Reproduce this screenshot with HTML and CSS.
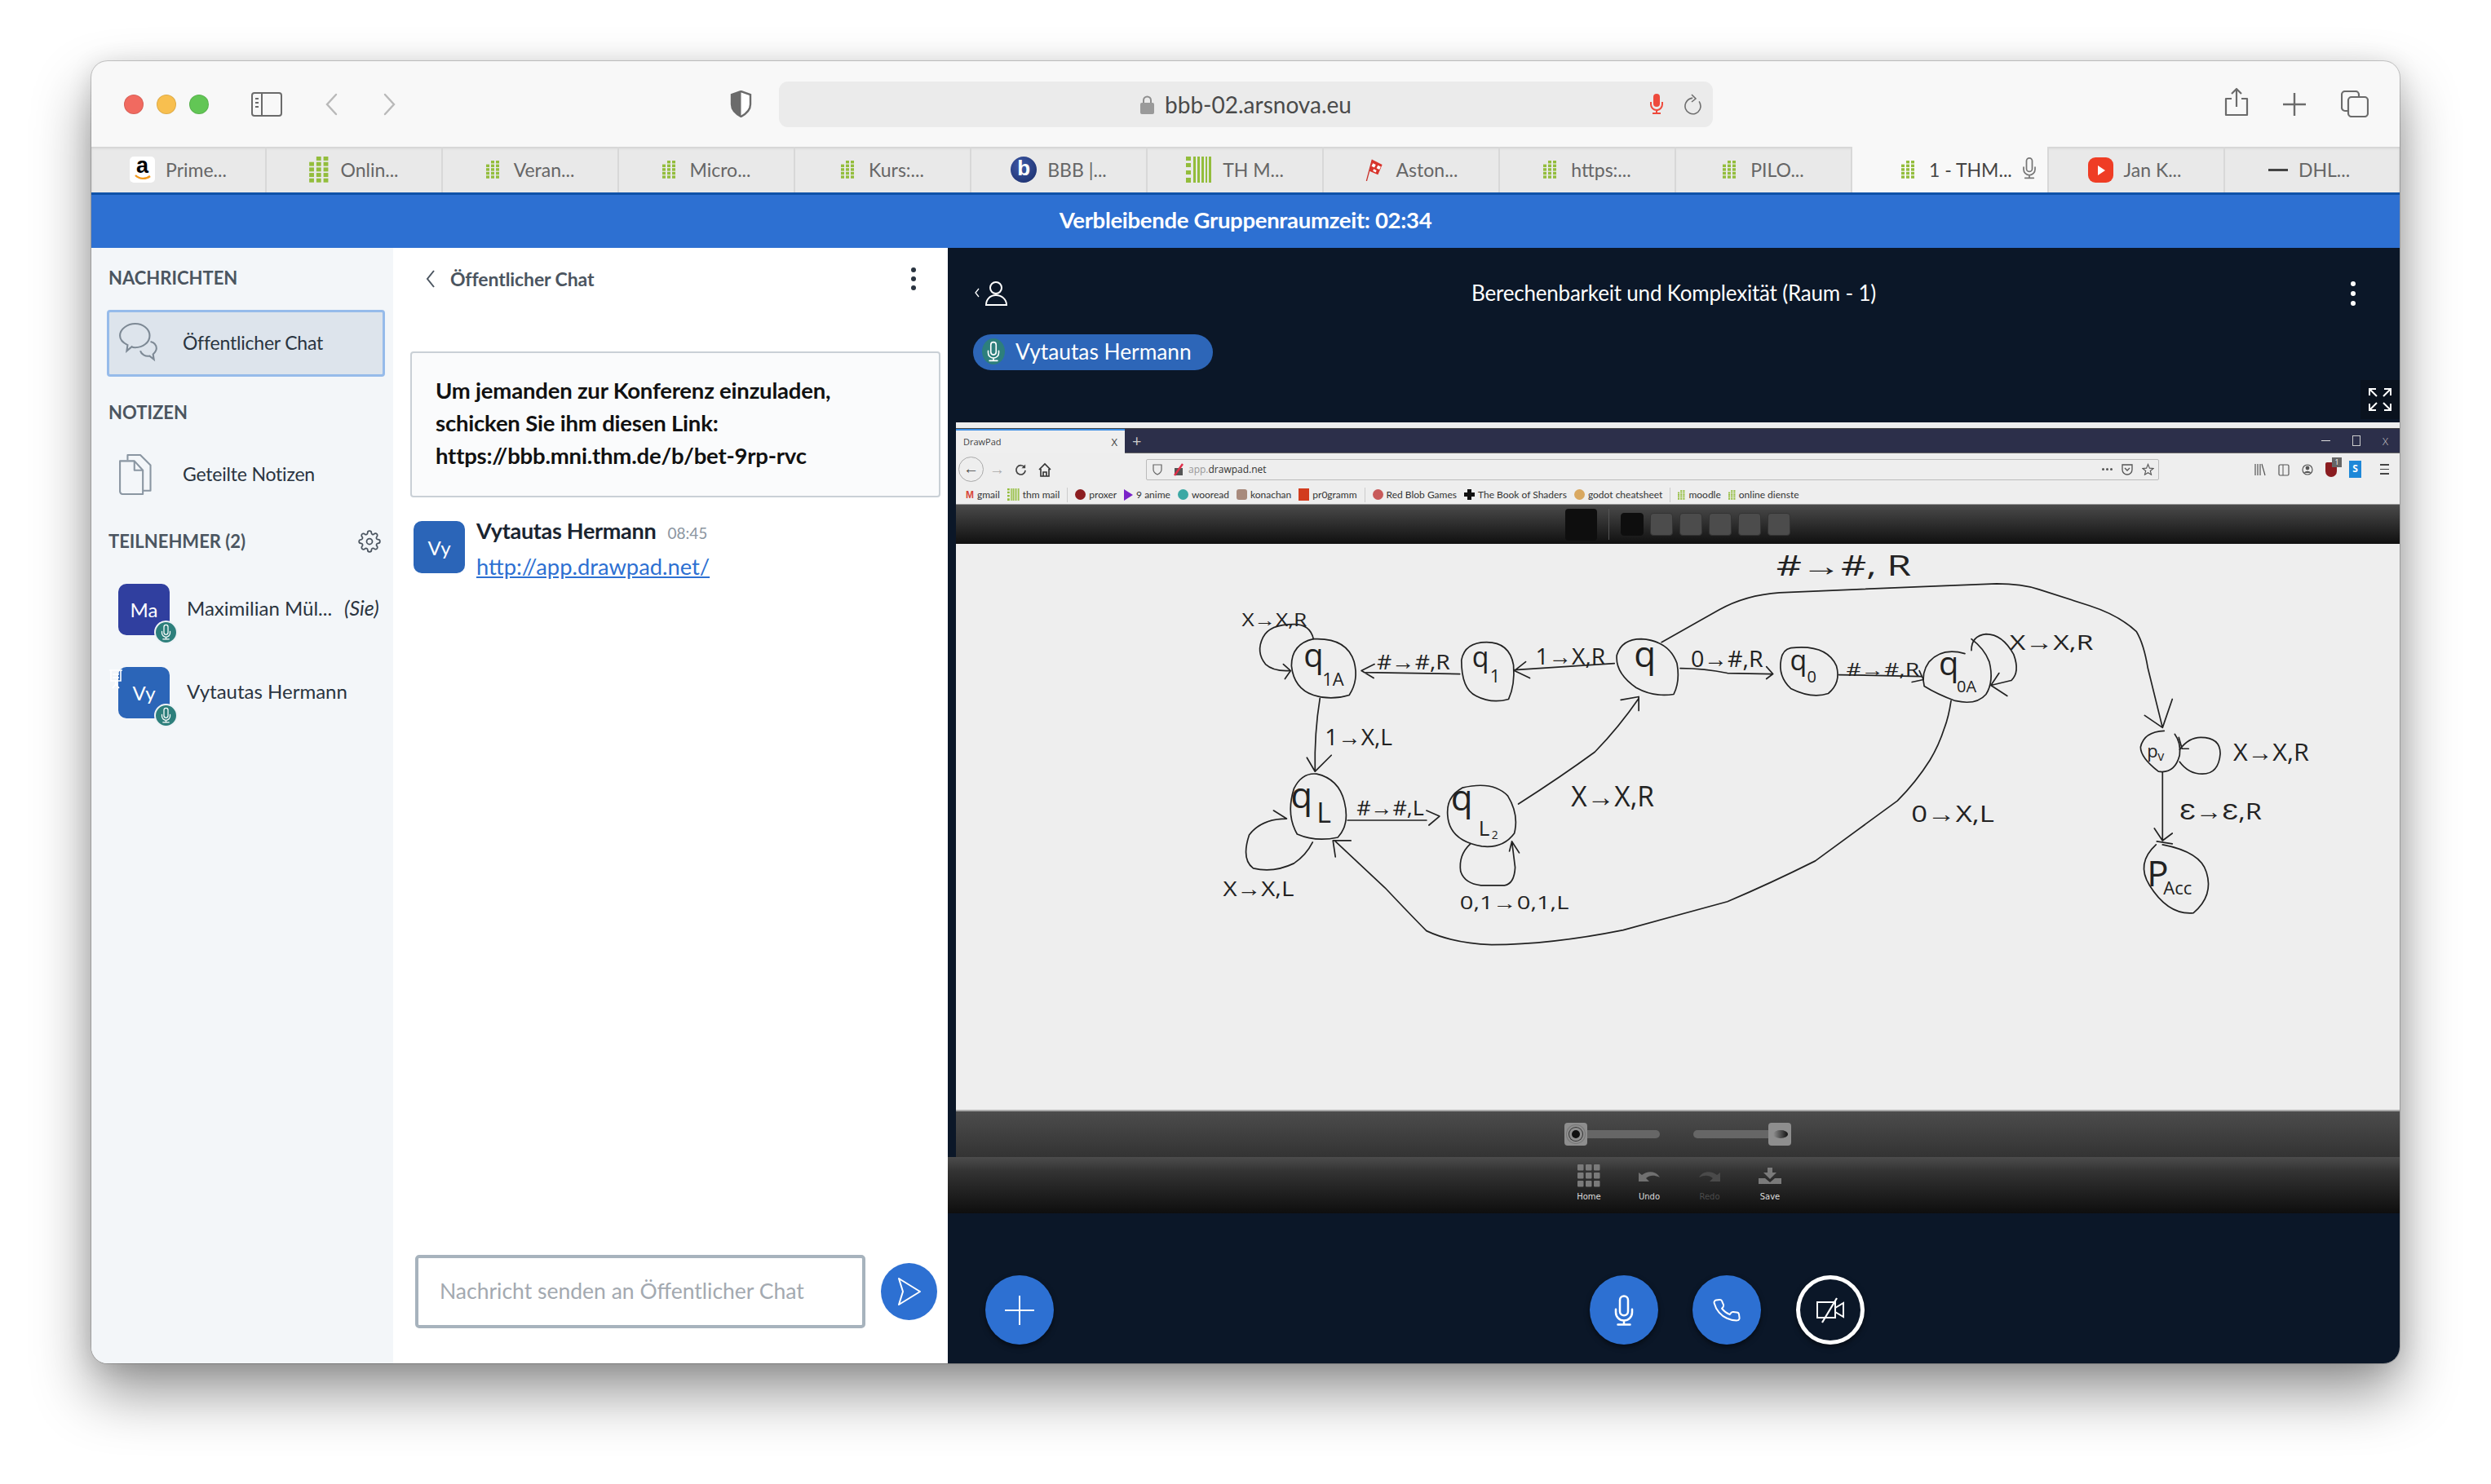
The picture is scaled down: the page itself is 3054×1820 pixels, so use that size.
FILE: index.html
```html
<!DOCTYPE html>
<html lang="de">
<head>
    <meta charset="UTF-8">
    <title>bbb-02.arsnova.eu</title>
    <link rel="stylesheet" href="styles.css">
</head>
<body>
    <svg class="sprites" width="0" height="0">
        <symbol id="grid" viewBox="0 0 17 22">
            <g fill="#93bd3c">
                <rect x="6" y="0" width="4" height="3.4"/><rect x="12" y="0" width="4" height="3.4"/>
                <rect x="0" y="4.6" width="4" height="3.4"/><rect x="6" y="4.6" width="4" height="3.4"/><rect x="12" y="4.6" width="4" height="3.4"/>
                <rect x="0" y="9.2" width="4" height="3.4"/><rect x="6" y="9.2" width="4" height="3.4"/><rect x="12" y="9.2" width="4" height="3.4"/>
                <rect x="0" y="13.8" width="4" height="3.4"/><rect x="6" y="13.8" width="4" height="3.4"/><rect x="12" y="13.8" width="4" height="3.4"/>
                <rect x="0" y="18.4" width="4" height="3.4"/><rect x="6" y="18.4" width="4" height="3.4"/><rect x="12" y="18.4" width="4" height="3.4"/>
            </g>
        </symbol>
        <symbol id="mic" viewBox="0 0 24 32">
            <g fill="none" stroke="currentColor" stroke-width="2" stroke-linecap="round">
                <rect x="8" y="2" width="8" height="19" rx="4"/>
                <path d="M4 15v3a8 8 0 0 0 16 0v-3M12 26v4M6 30h12"/>
            </g>
        </symbol>
        <symbol id="thm" viewBox="0 0 32 32">
            <g fill="#93bd3c">
                <rect x="0" y="0" width="6" height="5"/><rect x="0" y="8" width="6" height="5"/><rect x="0" y="17" width="6" height="5"/><rect x="0" y="26" width="6" height="6"/>
                <rect x="9" y="0" width="3" height="32"/><rect x="14" y="0" width="3" height="32"/><rect x="19" y="0" width="3" height="32"/><rect x="24" y="0" width="2" height="32"/><rect x="28" y="0" width="3" height="32"/>
            </g>
        </symbol>
    </svg>

    <div class="window">
        <header class="toolbar">
            <span class="light red"></span>
            <span class="light yellow"></span>
            <span class="light green"></span>
            <svg class="tb-sidebar" viewBox="0 0 38 30"><rect x="1" y="1" width="36" height="28" rx="3" fill="none" stroke="#6b6b6b" stroke-width="2"/><path d="M13 1v28" stroke="#6b6b6b" stroke-width="2"/><path d="M5 8h4M5 13h4M5 18h4" stroke="#6b6b6b" stroke-width="2"/></svg>
            <svg class="tb-back" viewBox="0 0 16 28"><path d="M14 2 3 14l11 12" fill="none" stroke="#b9b9b9" stroke-width="2.4" stroke-linecap="round"/></svg>
            <svg class="tb-fwd" viewBox="0 0 17 28"><path d="M3 2l11 12L3 26" fill="none" stroke="#b9b9b9" stroke-width="2.4" stroke-linecap="round"/></svg>
            <svg class="tb-shield" viewBox="0 0 27 33"><path d="M13.500 1 25 5v12c0 7-6 12-11.500 15C8 29 2 24 2 17V5z" fill="#fff" stroke="#6b6b6b" stroke-width="2.400"/><path d="M13.500 1 2 5v12c0 7 6 12 11.500 15z" fill="#6b6b6b"/></svg>
            <div class="urlbar">
                <span></span>
                <div class="url">
                    <svg class="lock" viewBox="0 0 17 24"><path d="M4 11V7a4.500 4.500 0 0 1 9 0v4" fill="none" stroke="#8e8e8e" stroke-width="2"/><rect x="0" y="10" width="17" height="14" rx="2" fill="#9a9a9a"/></svg>
                    <span>bbb-02.arsnova.eu</span>
                </div>
                <div class="url-right">
                    <svg class="url-mic" viewBox="0 0 18 25"><rect x="5" y="0" width="8" height="16" rx="4" fill="#ee4a3c"/><path d="M2 10v3a7 7 0 0 0 14 0v-3M9 20v4M4 24h10" fill="none" stroke="#ee4a3c" stroke-width="2"/></svg>
                    <svg class="url-reload" viewBox="0 0 21 26"><path d="M15 6.500C19 9 20 12 20 15a9.500 9.500 0 1 1-19 0c0-4 2-7 5-9" fill="none" stroke="#6f6f6f" stroke-width="1.600" transform="rotate(25 10 15)"/><path d="M9 1l5 5-5 4" fill="none" stroke="#6f6f6f" stroke-width="1.600"/></svg>
                </div>
            </div>
            <svg class="tb-share" viewBox="0 0 30 36"><path d="M9 14H2v20h26V14h-7M15 24V2M9 8l6-6 6 6" fill="none" stroke="#6b6b6b" stroke-width="2.200" stroke-linejoin="round"/></svg>
            <svg class="tb-plus" viewBox="0 0 28 28"><path d="M14 0v28M0 14h28" stroke="#6b6b6b" stroke-width="2.400"/></svg>
            <svg class="tb-tabs" viewBox="0 0 34 33"><rect x="9" y="8" width="24" height="24" rx="4" fill="none" stroke="#6b6b6b" stroke-width="2.200"/><path d="M9 25H5a4 4 0 0 1-4-4V5a4 4 0 0 1 4-4h13a4 4 0 0 1 4 4v3" fill="none" stroke="#6b6b6b" stroke-width="2.200"/></svg>
        </header>

        <nav class="tabs">
            <div class="tab first">
                <span class="fav-amazon"><span>a</span><svg viewBox="0 0 24 8"><path d="M3 1c5 5 13 5 18 1" fill="none" stroke="#f39a1c" stroke-width="2.400"/></svg></span>
                <span>Prime...</span>
            </div>
            <div class="tab"><svg class="fav-big"><use href="#grid"/></svg><span>Onlin...</span></div>
            <div class="tab"><svg class="fav-grid"><use href="#grid"/></svg><span>Veran...</span></div>
            <div class="tab"><svg class="fav-grid"><use href="#grid"/></svg><span>Micro...</span></div>
            <div class="tab"><svg class="fav-grid"><use href="#grid"/></svg><span>Kurs:...</span></div>
            <div class="tab"><span class="fav-bbb">b</span><span>BBB |...</span></div>
            <div class="tab"><svg class="fav-thm"><use href="#thm"/></svg><span>TH M...</span></div>
            <div class="tab">
                <svg class="fav-flag" viewBox="0 0 24 32"><path d="M1 32 9 2" stroke="#c8332c" stroke-width="1.500"/><path d="M9 2l14 7-6 14-12-5z" fill="#d8342c"/><path d="M10 7l4 2-2 4-4-2zM17 10l4 2-2 4-4-2zM11 15l4 2-1 3-4-2z" fill="#fff"/></svg>
                <span>Aston...</span>
            </div>
            <div class="tab"><svg class="fav-grid"><use href="#grid"/></svg><span>https:...</span></div>
            <div class="tab"><svg class="fav-grid"><use href="#grid"/></svg><span>PILO...</span></div>
            <div class="tab active"><svg class="fav-grid"><use href="#grid"/></svg><span>1 - THM...</span><svg class="tab-mic"><use href="#mic"/></svg></div>
            <div class="tab"><span class="fav-yt"></span><span>Jan K...</span></div>
            <div class="tab last"><span class="fav-dhl"></span><span>DHL...</span></div>
        </nav>

        <div class="banner">Verbleibende Gruppenraumzeit: 02:34</div>

        <main class="app">
            <aside class="sidebar">
                <h2 class="side-label first-label">NACHRICHTEN</h2>
                <div class="side-item selected">
                    <svg class="side-icon" viewBox="0 0 50 50"><g fill="none" stroke="#7d8995" stroke-width="2"><path d="M20 2c9 0 17 6 17 14s-8 14-17 14c-1 0-3 0-4-1l-6 5 1-7C5 24 2 21 2 16 2 8 11 2 20 2z"/><path d="M38 23c4 1 7 4 7 8 0 3-2 5-4 7l1 6-5-4c-5 1-10-2-11-6"/></g></svg>
                    <span>Öffentlicher Chat</span>
                </div>
                <h2 class="side-label notes-label">NOTIZEN</h2>
                <div class="side-item notes">
                    <svg class="side-icon" viewBox="0 0 50 50"><g fill="none" stroke="#8a96a2" stroke-width="2" stroke-linejoin="round"><path d="M11 8V2h15l12 12v30h-9"/><path d="M2 9h17l10 11v28H5a3 3 0 0 1-3-3z"/><path d="M19 9v11h10"/></g></svg>
                    <span>Geteilte Notizen</span>
                </div>
                <div class="side-head">
                    <h2 class="side-label">TEILNEHMER (2)</h2>
                    <svg class="gear" viewBox="0 0 24 24"><g fill="none" stroke="#4b5560" stroke-width="1.500"><circle cx="12" cy="12" r="3"/><path d="M19.400 15a1.650 1.650 0 0 0 .33 1.820l.06.06a2 2 0 0 1 0 2.830 2 2 0 0 1-2.830 0l-.06-.06a1.650 1.650 0 0 0-1.820-.33 1.650 1.650 0 0 0-1 1.510V21a2 2 0 0 1-2 2 2 2 0 0 1-2-2v-.09A1.650 1.650 0 0 0 9 19.400a1.650 1.650 0 0 0-1.820.33l-.06.06a2 2 0 0 1-2.830 0 2 2 0 0 1 0-2.830l.06-.06a1.650 1.650 0 0 0 .33-1.820 1.650 1.650 0 0 0-1.510-1H3a2 2 0 0 1-2-2 2 2 0 0 1 2-2h.09A1.650 1.650 0 0 0 4.600 9a1.650 1.650 0 0 0-.33-1.820l-.06-.06a2 2 0 0 1 0-2.830 2 2 0 0 1 2.830 0l.06.06a1.650 1.650 0 0 0 1.820.33H9a1.650 1.650 0 0 0 1-1.510V3a2 2 0 0 1 2-2 2 2 0 0 1 2 2v.09a1.650 1.650 0 0 0 1 1.510 1.650 1.650 0 0 0 1.820-.33l.06-.06a2 2 0 0 1 2.830 0 2 2 0 0 1 0 2.830l-.06.06a1.650 1.650 0 0 0-.33 1.820V9a1.650 1.650 0 0 0 1.510 1H21a2 2 0 0 1 2 2 2 2 0 0 1-2 2h-.09a1.650 1.650 0 0 0-1.510 1z"/></g></svg>
                </div>
                <div class="user">
                    <div class="avatar ma">Ma<span class="badge"><svg><use href="#mic"/></svg></span></div>
                    <span class="user-name">Maximilian Mül...</span>
                    <em class="user-you">(Sie)</em>
                </div>
                <div class="user second">
                    <div class="avatar vy">Vy
                        <svg class="presenter" viewBox="0 0 18 26"><path d="M1 2h16M3 2v13h12V2M5 7h8M5 11h8M9 15v4M5 24l4-5 4 5" fill="none" stroke="#fff" stroke-width="1.600"/></svg>
                        <span class="badge"><svg><use href="#mic"/></svg></span>
                    </div>
                    <span class="user-name">Vytautas Hermann</span>
                </div>
            </aside>

            <section class="chat">
                <div class="chat-head">
                    <svg class="chat-back" viewBox="0 0 12 24"><path d="M10 2 2 12l8 10" fill="none" stroke="#4b5560" stroke-width="2"/></svg>
                    <span>Öffentlicher Chat</span>
                    <span class="dots dark"><i></i><i></i><i></i></span>
                </div>
                <div class="welcome">Um jemanden zur Konferenz einzuladen,<br>schicken Sie ihm diesen Link:<br>https://bbb.mni.thm.de/b/bet-9rp-rvc</div>
                <div class="message">
                    <div class="avatar vy msg-avatar">Vy</div>
                    <div class="msg-body">
                        <div class="msg-top"><strong>Vytautas Hermann</strong><time>08:45</time></div>
                        <a class="msg-link" href="#">http://app.drawpad.net/</a>
                    </div>
                </div>
                <div class="composer">
                    <div class="chat-input">Nachricht senden an Öffentlicher Chat</div>
                    <div class="send"><svg viewBox="0 0 30 36"><path d="M2 2 28 18 2 34 7 18z" fill="none" stroke="#fff" stroke-width="2" stroke-linejoin="round"/></svg></div>
                </div>
            </section>

            <section class="media">
                <div class="media-head">
                    <div class="media-top">
                        <svg class="media-user" viewBox="0 0 42 32"><path d="M5 10 1 15l4 5" fill="none" stroke="#fff" stroke-width="1.300"/><g fill="none" stroke="#fff" stroke-width="2"><circle cx="26" cy="9" r="7"/><path d="M14 30c0-7 5-12 12-12s13 5 13 12z"/></g></svg>
                        <h1>Berechenbarkeit und Komplexität (Raum - 1)</h1>
                        <span class="dots"><i></i><i></i><i></i></span>
                    </div>
                    <div class="talker"><span class="talker-mic"><svg><use href="#mic"/></svg></span>Vytautas Hermann</div>
                    <div class="fullscreen"><svg viewBox="0 0 28 28"><path d="M1 9V1h8M1 1l9 9M27 9V1h-8M27 1l-9 9M1 19v8h8M1 27l9-9M27 19v8h-8M27 27l-9-9" fill="none" stroke="#fff" stroke-width="2"/></svg></div>
                </div>

                <div class="share">
                    <div class="ff-strip"></div>
                    <div class="ff-tabs">
                        <div class="ff-tab"><span>DrawPad</span><b>X</b></div>
                        <span class="ff-plus">+</span>
                        <div class="ff-win"><span class="win-min"></span><span class="win-max"></span><span class="win-close">X</span></div>
                    </div>
                    <div class="ff-nav">
                        <span class="ff-backbtn">←</span>
                        <span class="ff-fwd">→</span>
                        <svg class="ff-reload" viewBox="0 0 16 16"><path d="M13 5a6 6 0 1 0 1 4" fill="none" stroke="#444" stroke-width="1.800"/><path d="M14 1v5H9" fill="#444"/></svg>
                        <svg class="ff-home" viewBox="0 0 16 18"><path d="M1 9 8 2l7 7M3 8v9h10V8M6 17v-5h4v5" fill="none" stroke="#333" stroke-width="1.600"/></svg>
                        <div class="ff-url">
                            <svg class="ff-shield" viewBox="0 0 12 14"><path d="M1 1h10v6c0 3-3 5-5 6-2-1-5-3-5-6z" fill="none" stroke="#666" stroke-width="1.200"/></svg>
                            <svg class="ff-lock" viewBox="0 0 12 16"><rect x="1" y="6" width="10" height="9" fill="#555"/><path d="M1 15 11 1" stroke="#e0304a" stroke-width="2.500"/></svg>
                            <span class="ff-addr"><span>app.</span>drawpad.net</span>
                            <span class="ff-more"><i></i><i></i><i></i></span>
                            <svg class="ff-pocket" viewBox="0 0 14 14"><path d="M1 1h12v6a6 6 0 0 1-12 0z" fill="none" stroke="#555" stroke-width="1.300"/><path d="M4 5l3 3 3-3" fill="none" stroke="#555" stroke-width="1.300"/></svg>
                            <svg class="ff-star" viewBox="0 0 16 15"><path d="m8 1 2 5 5 .4-4 3.200 1.300 5L8 12l-4.300 2.600L5 9.600 1 6.400 6 6z" fill="none" stroke="#555" stroke-width="1.200"/></svg>
                        </div>
                        <div class="ff-tools">
                            <svg viewBox="0 0 14 16"><path d="M1 1v14M4 1v14M7 1v14M9 1l4 14" stroke="#555" stroke-width="1.200"/></svg>
                            <svg viewBox="0 0 14 16"><rect x="1" y="2" width="12" height="13" rx="1.500" fill="none" stroke="#555" stroke-width="1.200"/><path d="M6 2v13" stroke="#555"/></svg>
                            <svg viewBox="0 0 14 16"><circle cx="7" cy="8" r="6" fill="none" stroke="#555" stroke-width="1.200"/><circle cx="7" cy="6" r="2.400" fill="#555"/><path d="M3 12c1-3 7-3 8 0" fill="#555"/></svg>
                            <span class="ublock"><i>1</i></span>
                            <span class="ff-s">S</span>
                            <span class="ff-burger"><i></i><i></i><i></i></span>
                        </div>
                    </div>
                    <div class="ff-marks">
                        <span class="mark"><b class="m-gmail">M</b>gmail</span>
                        <span class="mark"><svg class="m-thm"><use href="#thm"/></svg>thm mail</span>
                        <i class="mark-sep"></i>
                        <span class="mark"><b class="m-dot m-proxer"></b>proxer</span>
                        <span class="mark"><b class="m-play"></b>9 anime</span>
                        <span class="mark"><b class="m-dot m-woo"></b>wooread</span>
                        <span class="mark"><b class="m-dot m-kona"></b>konachan</span>
                        <span class="mark"><b class="m-pr0"></b>pr0gramm</span>
                        <i class="mark-sep"></i>
                        <span class="mark"><b class="m-dot m-blob"></b>Red Blob Games</span>
                        <span class="mark"><b class="m-cross"></b>The Book of Shaders</span>
                        <span class="mark"><b class="m-dot m-godot"></b>godot cheatsheet</span>
                        <i class="mark-sep"></i>
                        <span class="mark"><svg class="m-grid"><use href="#grid"/></svg>moodle</span>
                        <span class="mark"><svg class="m-grid"><use href="#grid"/></svg>online dienste</span>
                    </div>
                    <div class="dp-colors">
                        <span class="dp-black"></span>
                        <i class="dp-sep"></i>
                        <div class="dp-swatches"><b class="on"></b><b></b><b></b><b></b><b></b><b></b></div>
                    </div>

                    <svg class="board" viewBox="1172 667 1770 696">
                        <g class="ink">
                            <path d="M1609 784Q1650 782 1659 812Q1665 835 1653 853Q1630 860 1609 853Q1585 845 1582 817Q1582 790 1609 784z"/>
                            <path d="M1822 788Q1850 788 1855 816Q1857 840 1849 858Q1828 864 1809 854Q1791 846 1791 810Q1795 788 1822 788z"/>
                            <path d="M2012 784Q2046 786 2056 814Q2060 836 2052 852Q2028 856 2006 844Q1980 826 1982 804Q1988 784 2012 784z"/>
                            <path d="M2196 795Q2240 790 2252 817Q2258 838 2242 851Q2222 858 2196 845Q2180 830 2184 809Q2186 797 2196 795z"/>
                            <path d="M2410 802Q2382 794 2366 812Q2356 826 2360 842Q2376 852 2398 860Q2424 866 2436 852Q2446 836 2440 812Q2434 796 2418 784"/>
                            <path d="M1613 950Q1640 956 1647 984Q1654 1012 1639 1028Q1612 1034 1589 1024Q1575 1000 1585 968Q1595 948 1613 950z"/>
                            <path d="M1792 967Q1830 958 1848 977Q1862 1000 1856 1023Q1842 1042 1816 1039Q1776 1032 1774 1001Q1772 978 1792 967z"/>
                            <path d="M2655 897Q2630 898 2626 917Q2626 930 2648 947Q2668 950 2674 927Q2676 912 2668 901"/>
                            <path d="M2653 1037Q2700 1046 2707 1071Q2716 1100 2691 1121Q2660 1124 2637 1087Q2620 1060 2645 1037"/>
                            <path d="M1609 784Q1605 766 1585 766Q1555 766 1547 782Q1538 800 1550 815Q1560 824 1579 823"/>
                            <path d="M1572 815l9 8-7 10"/>
                            <path d="M1789 827l-118-2M1684 815l-16 8 15 9"/>
                            <path d="M1979 814l-123 8M1870 812l-14 11 19 9"/>
                            <path d="M2060 820Q2090 820 2118 826L2172 827M2166 818l8 9-8 6"/>
                            <path d="M2255 828l102 2M2354 823l5 11-14 3"/>
                            <path d="M2418 798Q2418 780 2436 778Q2456 778 2470 803Q2478 825 2467 835L2442 841M2452 826l-10 15 20 13"/>
                            <path d="M2037 788L2108 748Q2140 730 2182 727L2373 719L2449 716Q2480 716 2501 723L2563 743Q2600 755 2621 775Q2630 790 2635 820L2653 893M2631 878l22 15 12-35"/>
                            <path d="M1617 857Q1610 900 1611 947M1601 930l10 17 20-20"/>
                            <path d="M1651 1007l97 0M1748 995l16 7-13 11"/>
                            <path d="M1861 987Q1914 953 1955 923Q1985 892 2009 857M1987 859l22-4 0 17"/>
                            <path d="M1576 1005Q1545 1005 1530 1025Q1520 1055 1535 1066Q1560 1072 1585 1060Q1600 1050 1608 1034M1560 995l16 10"/>
                            <path d="M1802 1036Q1787 1050 1790 1070Q1795 1085 1815 1087L1844 1087Q1856 1085 1857 1065L1853 1033M1850 1045l3-12 9 14"/>
                            <path d="M2393 860Q2390 880 2385 893Q2378 915 2367 933Q2350 960 2327 983L2226 1057Q2170 1085 2118 1107L1990 1142Q1900 1160 1828 1160Q1780 1158 1748 1143Q1730 1125 1697 1090L1636 1033M1655 1032l-22 0 3 20"/>
                            <path d="M2674 920Q2685 905 2700 905Q2724 905 2724 925Q2722 950 2702 950Q2685 950 2674 935M2673 905l4 14h8"/>
                            <path d="M2653 948l0 84M2643 1017l10 15 12-9M2646 1033l19 3"/>
                        </g>
                        <g class="hand">
                            <text x="2178" y="706" textLength="166" lengthAdjust="spacingAndGlyphs" class="t34">#→#, R</text>
                            <text x="1521" y="768" textLength="80" lengthAdjust="spacingAndGlyphs" class="t22">X→X,R</text>
                            <text x="1687" y="821" textLength="90" lengthAdjust="spacingAndGlyphs" class="t26">#→#,R</text>
                            <text x="1882" y="815" textLength="86" lengthAdjust="spacingAndGlyphs" class="t28">1→X,R</text>
                            <text x="2073" y="818" textLength="89" lengthAdjust="spacingAndGlyphs" class="t28">0→#,R</text>
                            <text x="2264" y="829" textLength="90" lengthAdjust="spacingAndGlyphs" class="t22">#→#,R</text>
                            <text x="2465" y="797" textLength="103" lengthAdjust="spacingAndGlyphs" class="t26">X→X,R</text>
                            <text x="1623" y="915" textLength="83" lengthAdjust="spacingAndGlyphs" class="t28">1→X,L</text>
                            <text x="1662" y="1001" textLength="83" lengthAdjust="spacingAndGlyphs" class="t26">#→#,L</text>
                            <text x="1926" y="990" textLength="102" lengthAdjust="spacingAndGlyphs" class="t34">X→X,R</text>
                            <text x="2344" y="1009" textLength="102" lengthAdjust="spacingAndGlyphs" class="t28">0→X,L</text>
                            <text x="1498" y="1100" textLength="87" lengthAdjust="spacingAndGlyphs" class="t26">X→X,L</text>
                            <text x="1789" y="1116" textLength="134" lengthAdjust="spacingAndGlyphs" class="t22">0,1→0,1,L</text>
                            <text x="2740" y="934" textLength="93" lengthAdjust="spacingAndGlyphs" class="t30">X→X,R</text>
                            <text x="2674" y="1006" textLength="101" lengthAdjust="spacingAndGlyphs" class="t28">Ɛ→Ɛ,R</text>
                            <text x="1597" y="818" class="t40">q</text><text x="1620" y="842" class="t22">1A</text>
                            <text x="1804" y="818" class="t34">q</text><text x="1826" y="838" class="t22">1</text>
                            <text x="2003" y="818" class="t44">q</text>
                            <text x="2195" y="822" class="t34">q</text><text x="2216" y="838" class="t20">0</text>
                            <text x="2378" y="828" class="t40">q</text><text x="2400" y="850" class="t20">0A</text>
                            <text x="1581" y="992" class="t44">q</text><text x="1613" y="1010" class="t34">L</text>
                            <text x="1778" y="995" class="t44">q</text><text x="1812" y="1026" class="t26">L</text><text x="1828" y="1030" class="t14">2</text>
                            <text x="2634" y="930" class="t22">p</text><text x="2647" y="934" class="t16">v</text>
                            <text x="2634" y="1088" class="t44">P</text><text x="2654" y="1098" class="t22">Acc</text>
                        </g>
                    </svg>

                    <div class="dp-sliders">
                        <span class="knob k-left"><i></i></span><span class="track"></span>
                        <span class="track second-track"></span><span class="knob k-right"><i></i></span>
                    </div>
                    <div class="dp-actions">
                        <div class="dp-action">
                            <svg viewBox="0 0 28 28"><g fill="#7a7a7a"><rect x="0" y="0" width="7.500" height="7.500" rx="1"/><rect x="10" y="0" width="7.500" height="7.500" rx="1"/><rect x="20" y="0" width="7.500" height="7.500" rx="1"/><rect x="0" y="10" width="7.500" height="7.500" rx="1"/><rect x="10" y="10" width="7.500" height="7.500" rx="1"/><rect x="20" y="10" width="7.500" height="7.500" rx="1"/><rect x="0" y="20" width="7.500" height="7.500" rx="1"/><rect x="10" y="20" width="7.500" height="7.500" rx="1"/><rect x="20" y="20" width="7.500" height="7.500" rx="1"/></g></svg>
                            <span>Home</span>
                        </div>
                        <div class="dp-action">
                            <svg viewBox="0 0 28 28"><path d="M1 21V10l4 3c6-5 17-6 22 3-7-3-12-3-17 1l4 4z" fill="#707070"/></svg>
                            <span>Undo</span>
                        </div>
                        <div class="dp-action off">
                            <svg viewBox="0 0 28 28"><path d="M27 21V10l-4 3C17 8 6 7 1 16c7-3 12-3 17 1l-4 4z" fill="#4a4a4a"/></svg>
                            <span>Redo</span>
                        </div>
                        <div class="dp-action">
                            <svg viewBox="0 0 28 28"><path d="M11 4h6v6h5l-8 8-8-8h5z" fill="#7a7a7a"/><path d="M0 17h8l6 5 6-5h8v7H0z" fill="#7a7a7a"/></svg>
                            <span>Save</span>
                        </div>
                    </div>
                </div>

                <div class="controls">
                    <button class="round plus"><svg viewBox="0 0 36 36"><path d="M18 0v36M0 18h36" stroke="#fff" stroke-width="2"/></svg></button>
                    <button class="round mic"><svg><use href="#mic"/></svg></button>
                    <button class="round phone"><svg viewBox="0 0 24 24"><path transform="rotate(-8 12 12)" d="M22 16.920v3a2 2 0 0 1-2.180 2 19.790 19.790 0 0 1-8.630-3.070 19.500 19.500 0 0 1-6-6 19.790 19.790 0 0 1-3.070-8.670A2 2 0 0 1 4.110 2h3a2 2 0 0 1 2 1.720 12.840 12.840 0 0 0 .7 2.810 2 2 0 0 1-.45 2.110L8.090 9.910a16 16 0 0 0 6 6l1.270-1.270a2 2 0 0 1 2.110-.45 12.840 12.840 0 0 0 2.810.7A2 2 0 0 1 22 16.920z" fill="none" stroke="#fff" stroke-width="1.400"/></svg></button>
                    <button class="round cam"><svg viewBox="0 0 36 32"><g fill="none" stroke="#fff" stroke-width="2"><rect x="2" y="6" width="22" height="19"/><path d="M24 13l10-6v17l-10-6"/><path d="M26 1 8 31" stroke-width="2.200"/></g></svg></button>
                </div>
            </section>
        </main>
    </div>
</body>
</html>
```

FILE: styles.css
```css
html, body {
    margin: 0;
    padding: 0;
    background-color: #fff;
}

body {
    width: 3054px;
    height: 1820px;
    overflow: hidden;
    font-family: "Lato", "Liberation Sans", sans-serif;
    padding: 75px 0 0 112px;
    box-sizing: border-box;
}

.sprites {
    position: absolute;
}

h1, h2 {
    margin: 0;
    font-weight: normal;
}

/* browser window */
.window {
    width: 2830px;
    height: 1597px;
    border-radius: 20px;
    overflow: hidden;
    display: flex;
    flex-direction: column;
    background-color: #f8f8f8;
    box-shadow: 0 0 0 1px rgba(0, 0, 0, 0.18), 0 36px 70px rgba(0, 0, 0, 0.42), 0 4px 30px rgba(0, 0, 0, 0.12);
}

.toolbar {
    height: 105px;
    flex: none;
    display: flex;
    align-items: center;
    padding-left: 40px;
    box-sizing: border-box;
}

.light {
    width: 24px;
    height: 24px;
    border-radius: 50%;
    margin-right: 16px;
    box-sizing: border-box;
    border: 1px solid rgba(0, 0, 0, 0.1);
}

.red { background-color: #f16a60; }
.yellow { background-color: #f8bf4f; }
.green { background-color: #62c655; margin-right: 0; }

.tb-sidebar { width: 38px; height: 30px; margin-left: 52px; flex: none; }
.tb-back { width: 16px; height: 28px; margin-left: 52px; flex: none; }
.tb-fwd { width: 17px; height: 28px; margin-left: 55px; flex: none; }
.tb-shield { width: 27px; height: 33px; margin-left: 409px; flex: none; }

.urlbar {
    width: 1145px;
    height: 56px;
    margin-left: 33px;
    flex: none;
    background-color: #ebebeb;
    border-radius: 11px;
    display: grid;
    grid-template-columns: 1fr auto 1fr;
    align-items: center;
}

.url {
    display: flex;
    align-items: center;
    gap: 13px;
    font-size: 28px;
    color: #4a4a4a;
}

.lock { width: 17px; height: 24px; }

.url-right {
    justify-self: end;
    display: flex;
    align-items: center;
    gap: 25px;
    padding-right: 14px;
}

.url-mic { width: 18px; height: 25px; }
.url-reload { width: 21px; height: 26px; }

.tb-share { width: 30px; height: 36px; margin-left: 627px; flex: none; margin-top: -6px; }
.tb-plus { width: 28px; height: 28px; margin-left: 42px; flex: none; }
.tb-tabs { width: 34px; height: 33px; margin-left: 43px; flex: none; }

/* tabs */
.tabs {
    height: 56px;
    flex: none;
    display: flex;
    box-shadow: inset 0 2px 3px rgba(0, 0, 0, 0.1);
    background-color: #e9e9e9;
}

.tab {
    width: 216px;
    flex: none;
    box-sizing: border-box;
    border-right: 2px solid #d8d8d8;
    display: flex;
    align-items: center;
    justify-content: center;
    gap: 13px;
    font-size: 23px;
    color: #666;
}

.tab.first { width: 215px; }
.tab.last { width: 214px; border-right: none; }

.tab.active {
    width: 241px;
    background-color: #f8f8f8;
    color: #444;
    justify-content: flex-start;
    padding-left: 60px;
    position: relative;
}

.tab-mic {
    position: absolute;
    right: 11px;
    top: 12px;
    width: 22px;
    height: 28px;
    color: #777;
}

.fav-grid { width: 17px; height: 22px; margin-right: 4px; }
.fav-big { width: 25px; height: 32px; }
.fav-thm { width: 32px; height: 32px; }
.fav-flag { width: 24px; height: 28px; margin-right: 2px; }

.fav-amazon {
    width: 31px;
    height: 32px;
    background-color: #fff;
    border-radius: 5px;
    display: flex;
    flex-direction: column;
    align-items: center;
    color: #000;
    font-family: "Liberation Sans", sans-serif;
    font-weight: bold;
    font-size: 27px;
    line-height: 22px;
}

.fav-amazon svg { width: 24px; height: 8px; }

.fav-bbb {
    width: 32px;
    height: 32px;
    border-radius: 50%;
    background: radial-gradient(circle at 40% 35%, #3f5aa8, #172a66);
    color: #fff;
    font-family: "Liberation Sans", sans-serif;
    font-weight: bold;
    font-size: 26px;
    line-height: 28px;
    text-align: center;
}

.fav-yt {
    width: 31px;
    height: 31px;
    border-radius: 9px;
    background-color: #ef3d25;
    position: relative;
    margin-left: -4px;
}

.fav-yt::after {
    content: "";
    position: absolute;
    left: 12px;
    top: 10px;
    border-left: 9px solid #fff;
    border-top: 6px solid transparent;
    border-bottom: 6px solid transparent;
}

.fav-dhl {
    width: 24px;
    height: 3px;
    background-color: #444;
    margin-left: -8px;
}

.banner {
    height: 68px;
    flex: none;
    box-sizing: border-box;
    border-top: 3px solid #0f52a8;
    padding-bottom: 5px;
    background-color: #2d70d2;
    color: #fff;
    font-weight: bold;
    font-size: 27.5px;
    letter-spacing: -0.3px;
    display: flex;
    align-items: center;
    justify-content: center;
}

.app {
    flex: 1;
    display: flex;
    min-height: 0;
}

/* left list */
.sidebar {
    width: 370px;
    flex: none;
    background-color: #f3f6f9;
    padding-left: 21px;
    box-sizing: border-box;
    color: #2a3440;
}

.side-label {
    font-size: 22px;
    font-weight: bold;
    color: #4b5560;
    line-height: 30px;
}

.first-label { margin-top: 22px; }
.notes-label { margin-top: 29px; }

.side-item {
    width: 341px;
    height: 82px;
    margin-left: -2px;
    box-sizing: border-box;
    display: flex;
    align-items: center;
    font-size: 23px;
    letter-spacing: -0.2px;
}

.side-item span { padding-bottom: 3px; }

.side-item.selected {
    margin-top: 24px;
    background-color: #dde4ec;
    border: 3px solid #96bbea;
    border-radius: 4px;
    padding-left: 11px;
}

.side-item.selected .side-icon { margin-right: 27px; }

.side-item.notes {
    margin-top: 20px;
    padding-left: 14px;
}

.side-icon {
    width: 52px;
    height: 52px;
    margin-right: 27px;
    flex: none;
}

.side-head {
    margin-top: 26px;
    width: 335px;
    display: flex;
    justify-content: space-between;
    align-items: center;
}

.gear { width: 28px; height: 28px; margin-right: 1px; }

.user {
    margin-top: 27px;
    margin-left: 12px;
    height: 82px;
    display: flex;
    align-items: center;
    font-size: 24px;
}

.user.second { margin-top: 20px; }

.user-name {
    margin-left: 21px;
    white-space: nowrap;
    padding-bottom: 4px;
}

.user-you {
    margin-left: 15px;
    font-size: 25px;
    white-space: nowrap;
    padding-bottom: 4px;
}

.avatar {
    width: 63px;
    height: 63px;
    flex: none;
    border-radius: 10px;
    color: #fff;
    font-size: 24px;
    display: flex;
    align-items: center;
    justify-content: center;
    position: relative;
}

.avatar.ma { background-color: #303f9f; }
.avatar.vy { background-color: #2b65b8; }

.badge {
    position: absolute;
    right: -10px;
    bottom: -11px;
    width: 29px;
    height: 29px;
    border-radius: 50%;
    background-color: #2d7f7c;
    border: 2px solid #eef2f6;
    box-sizing: border-box;
    color: #fff;
    display: flex;
    align-items: center;
    justify-content: center;
}

.badge svg { width: 15px; height: 20px; }

.presenter {
    position: absolute;
    left: -12px;
    top: 2px;
    width: 18px;
    height: 26px;
}

/* chat */
.chat {
    width: 680px;
    flex: none;
    background-color: #fff;
    display: flex;
    flex-direction: column;
}

.chat-head {
    height: 76px;
    flex: none;
    display: flex;
    align-items: center;
    padding-left: 40px;
    font-size: 23px;
    font-weight: bold;
    color: #4b5560;
    letter-spacing: -0.1px;
}

.chat-back { width: 12px; height: 24px; margin-right: 18px; }

.dots {
    display: flex;
    flex-direction: column;
    gap: 6px;
}

.dots i {
    display: block;
    width: 6px;
    height: 6px;
    border-radius: 50%;
    background-color: #fff;
}

.dots.dark {
    margin-left: auto;
    margin-right: 39px;
    gap: 5px;
}

.dots.dark i { background-color: #2a3440; }

.welcome {
    margin: 51px 0 0 21px;
    width: 650px;
    height: 179px;
    box-sizing: border-box;
    border: 2px solid #c9d0d6;
    border-radius: 4px;
    background-color: #fafbfc;
    padding: 26px 0 0 29px;
    font-size: 27.5px;
    font-weight: bold;
    line-height: 40px;
    color: #111;
    letter-spacing: -0.2px;
    white-space: nowrap;
}

.message {
    display: flex;
    margin: 29px 0 0 25px;
    gap: 14px;
}

.msg-avatar { height: 64px; }

.msg-top {
    display: flex;
    align-items: baseline;
    gap: 14px;
    font-size: 27px;
    line-height: 28px;
    color: #1a2430;
    margin-top: -2px;
}

.msg-top strong { letter-spacing: -0.3px; }

.msg-top time {
    font-size: 19px;
    color: #8b95a0;
}

.msg-link {
    display: block;
    margin-top: 13px;
    font-size: 27.3px;
    line-height: 28px;
    color: #2d70d2;
}

.composer {
    margin-top: auto;
    padding: 0 0 43px 27px;
    display: flex;
    align-items: center;
}

.chat-input {
    width: 552px;
    height: 90px;
    box-sizing: border-box;
    border: 4px solid #a7b3bd;
    border-radius: 5px;
    padding: 0 0 3px 26px;
    display: flex;
    align-items: center;
    font-size: 26.5px;
    color: #a3a9b0;
    white-space: nowrap;
}

.send {
    width: 69px;
    height: 70px;
    margin-left: 19px;
    border-radius: 50%;
    background-color: #2d70d2;
    display: flex;
    align-items: center;
    justify-content: center;
}

.send svg { width: 30px; height: 36px; }

/* video area */
.media {
    flex: 1;
    min-width: 0;
    background-color: #0b1728;
    display: flex;
    flex-direction: column;
}

.media-head {
    height: 214px;
    flex: none;
    box-sizing: border-box;
    padding-top: 6px;
    display: flex;
    flex-direction: column;
}

.media-top {
    height: 100px;
    display: grid;
    grid-template-columns: 1fr auto 1fr;
    align-items: center;
    padding: 0 33px;
}

.media-top h1 {
    font-size: 26px;
    color: #fff;
    font-weight: 400;
    letter-spacing: -0.2px;
    padding-bottom: 2px;
}

.media-top .dots { justify-self: end; margin-right: 21px; }

.media-user { width: 42px; height: 32px; }

.talker {
    margin-left: 31px;
    width: 294px;
    height: 44px;
    border-radius: 22px;
    background-color: #2d66b8;
    color: #fff;
    font-size: 26.3px;
    display: flex;
    align-items: center;
    box-sizing: border-box;
    padding: 0 0 2px 11px;
    gap: 13px;
}

.talker-mic {
    width: 28px;
    height: 32px;
    border-radius: 50%;
    background-color: #2d7f7c;
    display: flex;
    align-items: center;
    justify-content: center;
}

.talker-mic svg { width: 20px; height: 26px; }

.fullscreen {
    margin: 12px 0 0 auto;
    width: 48px;
    height: 48px;
    background-color: #0a121e;
    display: flex;
    align-items: center;
    justify-content: center;
}

.fullscreen svg { width: 28px; height: 28px; }

.share {
    height: 970px;
    flex: none;
    margin-left: 10px;
    display: flex;
    flex-direction: column;
    font-family: "Open Sans", sans-serif;
}

.ff-strip { height: 7px; background-color: #eee; }

.ff-tabs {
    height: 31px;
    box-sizing: border-box;
    background-color: #2c2f4a;
    display: flex;
    align-items: center;
    border-top: 1px solid #444;
    border-bottom: 1px solid #666;
}

.ff-tab {
    width: 207px;
    height: 30px;
    box-sizing: border-box;
    border-top: 2px solid #3c8fe6;
    background-color: #efefef;
    display: flex;
    align-items: center;
    justify-content: space-between;
    padding: 0 9px;
    font-size: 11px;
    color: #444;
}

.ff-tab b { font-weight: normal; font-size: 13px; }

.ff-plus {
    margin-left: 9px;
    color: #ccc;
    font-size: 20px;
    line-height: 20px;
}

.ff-win {
    margin-left: auto;
    display: flex;
    align-items: center;
    gap: 27px;
    padding-right: 14px;
    color: #ccc;
}

.win-min { width: 11px; height: 1px; background-color: #ddd; }
.win-max { width: 8px; height: 11px; border: 1px solid #ccc; }
.win-close { font-size: 13px; font-family: "Open Sans", sans-serif; font-weight: 300; }

.ff-nav {
    height: 39px;
    background-color: #eee;
    display: flex;
    align-items: center;
    padding-left: 3px;
}

.ff-backbtn {
    width: 29px;
    height: 29px;
    border-radius: 50%;
    border: 1px solid #aaa;
    text-align: center;
    line-height: 26px;
    font-size: 19px;
    color: #444;
}

.ff-fwd {
    margin-left: 7px;
    color: #aaa;
    font-size: 19px;
    line-height: 19px;
}

.ff-reload { width: 15px; height: 16px; margin-left: 12px; }
.ff-home { width: 16px; height: 18px; margin-left: 14px; }

.ff-url {
    width: 1242px;
    height: 26px;
    box-sizing: border-box;
    margin-left: 116px;
    border: 1px solid #bbb;
    border-radius: 2px;
    display: flex;
    align-items: center;
    padding-left: 7px;
}

.ff-shield { width: 12px; height: 14px; }
.ff-lock { width: 12px; height: 16px; margin-left: 14px; }

.ff-addr {
    margin-left: 6px;
    font-size: 12px;
    color: #333;
}

.ff-addr span { color: #999; }

.ff-more {
    margin-left: auto;
    display: flex;
    gap: 2px;
}

.ff-more i {
    width: 3px;
    height: 3px;
    border-radius: 50%;
    background-color: #555;
}

.ff-pocket { width: 14px; height: 14px; margin-left: 11px; }
.ff-star { width: 15px; height: 15px; margin: 0 5px 0 11px; }

.ff-tools {
    margin-left: 117px;
    display: flex;
    align-items: center;
    gap: 15px;
}

.ff-tools svg { width: 14px; height: 16px; }

.ublock {
    width: 14px;
    height: 18px;
    background-color: #8a1c20;
    border-radius: 2px 2px 7px 7px;
    position: relative;
}

.ublock i {
    position: absolute;
    right: -6px;
    top: -6px;
    width: 12px;
    height: 12px;
    background-color: #666;
    color: #fff;
    font-size: 9px;
    line-height: 12px;
    text-align: center;
    font-style: normal;
}

.ff-s {
    width: 15px;
    height: 21px;
    background-color: #1e88d8;
    color: #fff;
    font-size: 12px;
    font-weight: bold;
    line-height: 20px;
    text-align: center;
}

.ff-burger {
    margin-left: 8px;
    display: flex;
    flex-direction: column;
    gap: 4px;
}

.ff-burger i { width: 11px; height: 1.5px; background-color: #444; display: block; }

.ff-marks {
    height: 24px;
    background-color: #eee;
    border-bottom: 1px solid #999;
    box-sizing: border-box;
    display: flex;
    align-items: center;
    padding-left: 12px;
    gap: 9px;
    font-family: "Lato", sans-serif;
    font-size: 12px;
    color: #333;
    white-space: nowrap;
}

.mark {
    display: flex;
    align-items: center;
    gap: 4px;
}

.mark b { display: block; flex: none; }

.mark-sep {
    width: 1px;
    height: 18px;
    background-color: #ccc;
}

.m-gmail {
    font-size: 12px;
    color: #d8463a;
    font-family: "Liberation Sans", sans-serif;
}

.m-thm { width: 15px; height: 15px; }
.m-grid { width: 9px; height: 14px; }

.m-dot { width: 13px; height: 13px; border-radius: 50%; }
.m-proxer { background-color: #8c1d20; }
.m-woo { background-color: #3ba8a4; }
.m-kona { background-color: #a88a7c; border-radius: 3px; }
.m-blob { background-color: #c85a5a; }
.m-godot { background-color: #d9a860; }

.m-play {
    border-left: 11px solid #7a22c8;
    border-top: 7px solid transparent;
    border-bottom: 7px solid transparent;
}

.m-pr0 { width: 13px; height: 15px; background-color: #d23c1e; }
.m-cross { width: 13px; height: 13px; background: linear-gradient(#111, #111) center / 5px 13px no-repeat, linear-gradient(#111, #111) center / 13px 5px no-repeat; }

.dp-colors {
    height: 48px;
    flex: none;
    background: linear-gradient(#4a4a4a, #101010);
    display: flex;
    align-items: center;
    padding-left: 747px;
}

.dp-black { width: 39px; height: 39px; background-color: #0e0e0e; border-radius: 4px; }
.dp-sep { width: 1px; height: 38px; background-color: #555; margin-left: 14px; }

.dp-swatches {
    margin-left: 14px;
    display: flex;
    gap: 8px;
}

.dp-swatches b {
    width: 28px;
    height: 28px;
    background-color: #4c4c4c;
    border-radius: 4px;
    border: 1px solid #333;
    box-sizing: border-box;
}

.dp-swatches b.on { background-color: #0e0e0e; border-color: #0e0e0e; }

.board {
    width: 1770px;
    height: 696px;
    flex: none;
    display: block;
    background-color: #eee;
    border-bottom: 2px solid #aaa;
    box-sizing: border-box;
}

.ink path {
    fill: none;
    stroke: #222;
    stroke-width: 1.700;
    stroke-linecap: round;
    stroke-linejoin: round;
}

.hand text {
    font-family: "Open Sans", sans-serif;
    font-weight: 400;
    fill: #222;
}

.t14 { font-size: 14px; }
.t16 { font-size: 16px; }
.t20 { font-size: 20px; }
.t22 { font-size: 22px; }
.t26 { font-size: 26px; }
.t28 { font-size: 28px; }
.t30 { font-size: 30px; }
.t34 { font-size: 34px; }
.t40 { font-size: 40px; }
.t44 { font-size: 44px; }

.dp-sliders {
    height: 56px;
    flex: none;
    background: linear-gradient(#4c4c4c, #333);
    display: flex;
    align-items: center;
    padding-left: 746px;
    box-sizing: border-box;
}

.knob {
    width: 28px;
    height: 28px;
    border-radius: 4px;
    background-color: #8e8e8e;
    display: flex;
    align-items: center;
    justify-content: center;
}

.knob i {
    width: 10px;
    height: 10px;
    border-radius: 50%;
    background-color: #111;
    display: block;
}

.k-left i { box-shadow: 0 0 0 3px #8e8e8e, 0 0 0 4px #333, 0 0 0 6px #8e8e8e, 0 0 0 7px #777; }
.k-right i { width: 18px; background: linear-gradient(90deg, #8e8e8e, #111); margin-left: 2px; }

.track {
    width: 89px;
    height: 10px;
    background-color: #666;
    border-radius: 0 5px 5px 0;
}

.track.second-track {
    width: 92px;
    margin-left: 41px;
    border-radius: 5px 0 0 5px;
}

.dp-actions {
    height: 69px;
    flex: none;
    margin-left: -10px;
    background: linear-gradient(#4c4c4c, #333 25%, #0e0e0e);
    display: flex;
    padding: 9px 0 0 766px;
    box-sizing: border-box;
    gap: 34px;
    font-family: "DejaVu Sans", sans-serif;
}

.dp-action {
    width: 40px;
    display: flex;
    flex-direction: column;
    align-items: center;
    gap: 6px;
    font-size: 10px;
    color: #ddd;
}

.dp-action svg { width: 28px; height: 28px; }
.dp-action.off { color: #4a4a4a; }

/* round buttons */
.controls {
    flex: 1;
    display: flex;
    align-items: flex-start;
    padding: 76px 0 0 46px;
    box-sizing: border-box;
}

.round {
    width: 84px;
    height: 85px;
    padding: 0;
    border: none;
    border-radius: 50%;
    background-color: #2d70d2;
    box-shadow: 0 3px 6px rgba(0, 0, 0, 0.5);
    display: flex;
    align-items: center;
    justify-content: center;
    color: #fff;
}

.round.plus svg { width: 36px; height: 36px; }
.round.mic { margin-left: 657px; }
.round.mic svg { width: 30px; height: 40px; }
.round.phone { margin-left: 42px; }
.round.phone svg { width: 34px; height: 34px; }

.round.cam {
    margin-left: 43px;
    background-color: #0b1728;
    border: 5px solid #fff;
    box-sizing: border-box;
}

.round.cam svg { width: 36px; height: 32px; }
```
